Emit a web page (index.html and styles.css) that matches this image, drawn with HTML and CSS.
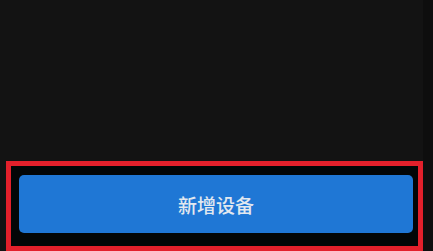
FILE: index.html
```html
<!DOCTYPE html>
<html lang="zh-CN">
<head>
    <meta charset="UTF-8">
    <meta name="viewport" content="width=device-width, initial-scale=1.0">
    <title>新增设备</title>
    <link rel="stylesheet" href="styles.css">
</head>
<body>
    <div class="page">
        <div class="main">
            <div class="spacer"></div>
            <div class="frame">
                <button class="add-btn">新增设备</button>
            </div>
        </div>
        <div class="edge"></div>
    </div>
</body>
</html>
```
FILE: styles.css
```css
html, body {
    margin: 0;
    padding: 0;
    height: 100%;
    background-color: #131313;
    overflow: hidden;
}
.page {
    display: flex;
    height: 251px;
}
.main {
    flex: 1;
    display: flex;
    flex-direction: column;
    padding-left: 6px;
}
.spacer {
    height: 161px;
}
.frame {
    flex: 1;
    box-sizing: border-box;
    border: 5px solid #e3202b;
    background: #030607;
    padding: 9px 5px 13px 8px;
    display: flex;
}
.add-btn {
    flex: 1;
    height: 58px;
    border: none;
    border-radius: 5px;
    background-color: #1f77d5;
    color: #e2e8ef;
    font-family: "Noto Sans CJK SC", "Noto Sans", sans-serif;
    font-size: 19px;
    font-weight: 500;
    cursor: pointer;
}
.edge {
    width: 10px;
    background-color: #0e0e0e;
}
```
